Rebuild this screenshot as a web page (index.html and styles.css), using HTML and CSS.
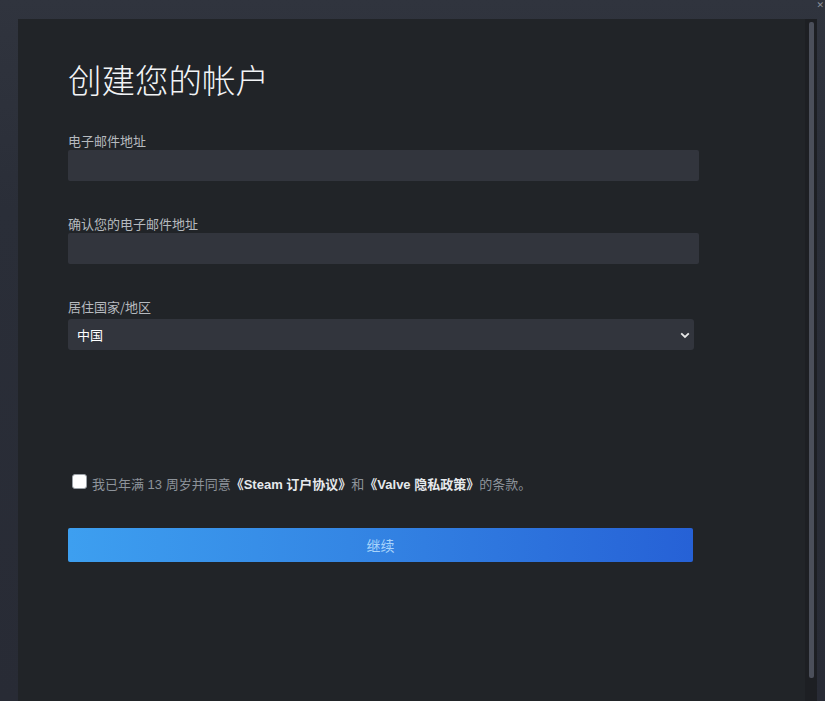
FILE: index.html
```html
<!DOCTYPE html>
<html lang="zh-CN">
<head>
<meta charset="utf-8">
<title>创建您的帐户</title>
<link rel="stylesheet" href="styles.css">
</head>
<body>
<div class="frame">
  <span class="close">✕</span>
  <div class="panel">
    <main class="content">
      <h1 class="title">创建您的帐户</h1>
      <div class="field">
        <label class="label">电子邮件地址</label>
        <input class="input" type="text">
      </div>
      <div class="field">
        <label class="label">确认您的电子邮件地址</label>
        <input class="input" type="text">
      </div>
      <div class="field field-country">
        <label class="label">居住国家/地区</label>
        <div class="select-wrap">
          <select class="select"><option>中国</option></select>
          <svg class="chevron" width="10" height="7" viewBox="0 0 10 7"><path d="M1.2 1.3 L5 5 L8.8 1.3" fill="none" stroke="#e8e8e8" stroke-width="1.8"/></svg>
        </div>
      </div>
      <div class="agree">
        <span class="checkbox"></span>
        <span class="agree-text">我已年满 13 周岁并同意<b class="link">《Steam 订户协议》</b>和<b class="link">《Valve 隐私政策》</b>的条款。</span>
      </div>
      <button class="button">继续</button>
    </main>
    <div class="scrollbar"><div class="thumb"></div></div>
  </div>
</div>
</body>
</html>
```
FILE: styles.css
```css
html, body {
  margin: 0;
  height: 100%;
}
body {
  background: linear-gradient(180deg, #30343e 0%, #2a2e38 30%, #282b35 100%);
  font-family: "Liberation Sans", Arial, "Noto Sans CJK SC", sans-serif;
  overflow: hidden;
}
.frame {
  position: relative;
  height: 100%;
  box-sizing: border-box;
  padding: 19px 8px 0 18px;
}
.close {
  position: absolute;
  right: 1px;
  top: 0;
  color: #8a8f98;
  font-size: 9px;
  line-height: 10px;
  font-family: "DejaVu Sans", sans-serif;
}
.panel {
  display: flex;
  height: 100%;
  overflow: hidden;
  background: #212428;
}
.content {
  flex: 1;
  padding: 40px 0 0 50px;
}
.title {
  margin: 0 0 33px;
  font-family: "Noto Sans CJK SC", sans-serif;
  font-weight: 300;
  font-size: 33.5px;
  line-height: 40px;
  color: #f2f4f6;
}
.field {
  width: 631px;
  margin-bottom: 34px;
}
.label {
  display: block;
  font-family: "Noto Sans CJK SC", sans-serif;
  font-size: 13px;
  line-height: 17px;
  color: #b6babf;
  margin-bottom: 1px;
}
.input {
  display: block;
  box-sizing: border-box;
  width: 631px;
  height: 31px;
  border: none;
  border-radius: 2px;
  background: #32353d;
  outline: none;
  padding: 0 10px;
}
.field-country {
  width: 626px;
  margin-top: 4px;
}
.field-country .label {
  margin-bottom: 4px;
}
.select-wrap {
  position: relative;
}
.select {
  display: block;
  box-sizing: border-box;
  width: 626px;
  height: 31px;
  border: none;
  border-radius: 3px;
  background: #32353d;
  color: #ffffff;
  font-family: "Noto Sans CJK SC", sans-serif;
  font-size: 13px;
  padding: 0 9px;
  appearance: none;
  -webkit-appearance: none;
  outline: none;
}
.chevron {
  position: absolute;
  right: 4px;
  top: 13px;
}
.agree {
  display: flex;
  align-items: flex-start;
  margin-top: 124px;
  margin-left: 4px;
}
.checkbox {
  width: 15px;
  height: 15px;
  box-sizing: border-box;
  background: #ffffff;
  border: 1px solid #9aa0a6;
  border-radius: 3px;
  margin-right: 5px;
  flex: none;
}
.agree-text {
  font-family: "Liberation Sans", Arial, "Noto Sans CJK SC", sans-serif;
  font-size: 13px;
  line-height: 20px;
  color: #8d939a;
  padding-top: 1px;
}
.link {
  font-weight: bold;
  color: #e6e9ec;
}
.button {
  display: block;
  margin-top: 33px;
  width: 625px;
  height: 34px;
  border: none;
  border-radius: 2px;
  background: linear-gradient(90deg, #3d9ff0 0%, #3486e4 45%, #2661d6 100%);
  color: #a8d4fb;
  font-family: "Noto Sans CJK SC", sans-serif;
  font-size: 14px;
  cursor: pointer;
}
.scrollbar {
  width: 12px;
  background: #1d1f23;
  padding-top: 3px;
  display: flex;
  justify-content: center;
}
.thumb {
  width: 5px;
  height: 656px;
  border-radius: 2px;
  background: #4b4f5a;
}
```
